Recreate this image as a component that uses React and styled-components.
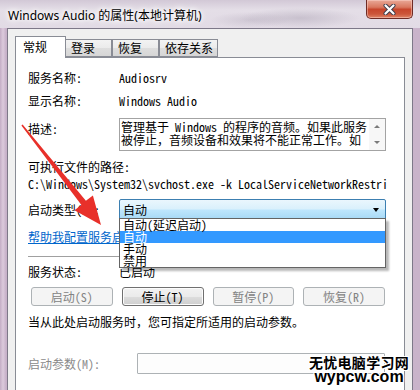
import React from "react";
import styled, { createGlobalStyle } from "styled-components";

const Global = createGlobalStyle`
  html, body { margin: 0; padding: 0; width: 420px; height: 390px; overflow: hidden; background: #fff; }
  #root { width: 420px; height: 390px; }
`;

const SIMSUN = `"Noto Sans Mono CJK SC", "Noto Sans CJK SC", monospace`;
const UI = `"Noto Sans", "Noto Sans CJK SC", sans-serif`;

const Window = styled.div`
  position: relative;
  width: 420px;
  height: 390px;
  overflow: hidden;
  display: flex;
  flex-direction: column;
  background: linear-gradient(90deg, #c3adc5 0px, #dccadc 3px, #c7b1c9 6px, #cdb9cf 50%, #c9b3ca 100%);
`;

const TitleBar = styled.div`
  height: 28px;
  flex: none;
  display: flex;
  justify-content: space-between;
  align-items: flex-start;
  background:
    radial-gradient(ellipse 60px 10px at 300px 18px, rgba(150,140,160,0.35), transparent),
    radial-gradient(ellipse 40px 8px at 250px 20px, rgba(150,140,160,0.25), transparent),
    linear-gradient(180deg, #d2c8d6 0%, #e4dee7 35%, #e2dbe5 100%);
`;

const Title = styled.div`
  font-family: ${UI};
  font-size: 12px;
  line-height: 16px;
  color: #000;
  padding: 8px 0 0 8px;
  text-shadow: 0 0 4px #fff, 0 0 6px #fff, 0 0 8px #fff;
`;

const CloseButton = styled.div`
  width: 47px;
  height: 19px;
  margin-right: 7px;
  box-sizing: border-box;
  border: 1px solid #6e2b25;
  border-top: none;
  border-radius: 0 0 5px 5px;
  background: linear-gradient(180deg, #e9a897 0%, #d9785f 40%, #c7462c 52%, #cc563a 78%, #de8568 100%);
  box-shadow: inset 0 0 0 1px rgba(255, 220, 210, 0.45);
  display: flex;
  align-items: center;
  justify-content: center;
`;

const Client = styled.div`
  flex: 1;
  margin: 0 7px;
  border: 1px solid #7d7888;
  border-bottom: none;
  background: #f0f0f0;
  padding: 7px 7px 0 7px;
  display: flex;
  flex-direction: column;
  min-height: 0;
`;

const TabStrip = styled.div`
  height: 21px;
  flex: none;
  display: flex;
  align-items: flex-end;
  position: relative;
  z-index: 2;
`;

const Tab = styled.div`
  box-sizing: border-box;
  min-width: ${(p) => (p.$active ? 51 : 47)}px;
  height: ${(p) => (p.$active ? 22 : 18)}px;
  margin-bottom: ${(p) => (p.$active ? -1 : 0)}px;
  margin-right: ${(p) => (p.$active ? -1 : 0)}px;
  padding: ${(p) => (p.$active ? "3px 4px 0 7px" : "1px 4px 0 5px")};
  border: 1px solid #898c95;
  border-bottom: ${(p) => (p.$active ? "none" : "1px solid #898c95")};
  background: ${(p) =>
    p.$active ? "#fff" : "linear-gradient(180deg, #f3f3f3 0%, #ebebeb 50%, #dedede 51%, #d6d6d6 100%)"};
  font-family: ${SIMSUN};
  font-size: 12px;
  line-height: 14px;
  color: #000;
  white-space: nowrap;
  position: relative;
  z-index: ${(p) => (p.$active ? 2 : 1)};
`;

const Panel = styled.div`
  flex: 1;
  border: 1px solid #898c95;
  border-bottom: none;
  background: #fff;
  padding: 14px 12px 0 12px;
  display: flex;
  flex-direction: column;
  position: relative;
  z-index: 1;
  font-family: ${SIMSUN};
  font-size: 12px;
  color: #000;
`;

const Row = styled.div`
  display: flex;
  align-items: ${(p) => (p.$top ? "flex-start" : "center")};
  height: ${(p) => p.$h || 12}px;
  margin-top: ${(p) => p.$mt || 0}px;
  flex: none;
  position: relative;
`;

const Label = styled.div`
  width: ${(p) => p.$w || 91}px;
  flex: none;
  line-height: 12px;
  white-space: nowrap;
  padding-top: ${(p) => p.$pt || 0}px;
  color: ${(p) => (p.$disabled ? "#8a8a8a" : "#000")};
`;

const Value = styled.div`
  line-height: 12px;
  white-space: pre;
`;

const DescBox = styled.div`
  box-sizing: border-box;
  width: 267px;
  height: 33px;
  border: 1px solid #a3a3a3;
  display: flex;
  background: #fff;
`;

const DescText = styled.div`
  flex: 1;
  padding: 1px 0 0 1px;
  line-height: 13px;
  white-space: pre;
  overflow: hidden;
`;

const ScrollBar = styled.div`
  width: 16px;
  flex: none;
  display: flex;
  flex-direction: column;
  background: #f7f7f7;
`;

const ScrollBtn = styled.div`
  flex: 1;
  display: flex;
  align-items: center;
  justify-content: center;
  &::after {
    content: "";
    width: 0;
    height: 0;
    border-left: 3px solid transparent;
    border-right: 3px solid transparent;
    ${(p) => (p.$down ? "border-top: 3px solid #7a7a7a;" : "border-bottom: 3px solid #7a7a7a;")}
  }
`;

const Combo = styled.div`
  box-sizing: border-box;
  width: 267px;
  height: 21px;
  border: 1px solid #3c7fb1;
  border-radius: 2px;
  background: linear-gradient(180deg, #eaf6fd 0%, #d9f0fc 48%, #bee6fd 52%, #a7d9f5 100%);
  display: flex;
  align-items: center;
  justify-content: space-between;
  padding: 0 6px 0 3px;
  line-height: 12px;
  position: relative;
  &::after {
    content: "";
    border-left: 3.5px solid transparent;
    border-right: 3.5px solid transparent;
    border-top: 4px solid #000;
  }
`;

const DropList = styled.div`
  position: absolute;
  top: calc(100% - 1px);
  left: -1px;
  width: 267px;
  box-sizing: border-box;
  border: 1px solid #646464;
  background: #fff;
  box-shadow: 3px 3px 2px rgba(0, 0, 0, 0.28);
  z-index: 5;
`;

const DropItem = styled.div`
  height: 12px;
  line-height: 12px;
  padding-left: 3px;
  white-space: nowrap;
  background: ${(p) => (p.$sel ? "#3399ff" : "transparent")};
  color: ${(p) => (p.$sel ? "#fff" : "#000")};
`;

const HelpLink = styled.a`
  display: block;
  margin-top: 11px;
  line-height: 12px;
  height: 12px;
  color: #0066cc;
  text-decoration: underline;
  flex: none;
  white-space: nowrap;
`;

const Separator = styled.div`
  margin-top: 13px;
  width: 357px;
  height: 1px;
  background: #a0a0a0;
  border-bottom: 1px solid #fff;
  flex: none;
`;

const ButtonRow = styled.div`
  display: flex;
  gap: 9px;
  padding-left: 3px;
  margin-top: 9px;
  height: 19px;
  width: 354px;
  flex: none;
`;

const Button = styled.div`
  flex: 1;
  box-sizing: border-box;
  height: 19px;
  border: 1px solid ${(p) => (p.$disabled ? "#adb2b5" : "#707070")};
  border-radius: 3px;
  background: ${(p) =>
    p.$disabled
      ? "#f4f4f4"
      : "linear-gradient(180deg, #f2f2f2 0%, #ebebeb 50%, #dddddd 51%, #cfcfcf 100%)"};
  box-shadow: ${(p) => (p.$disabled ? "none" : "inset 0 0 0 1px #fcfcfc")};
  color: ${(p) => (p.$disabled ? "#838383" : "#000")};
  display: flex;
  align-items: center;
  justify-content: center;
  line-height: 12px;
  white-space: nowrap;
`;

const Note = styled.div`
  margin-top: 10px;
  line-height: 12px;
  height: 12px;
  flex: none;
  white-space: nowrap;
`;

const ParamInput = styled.div`
  box-sizing: border-box;
  width: 248px;
  height: 21px;
  border: 1px solid #adb2b5;
  border-radius: 1px;
  background: #fdfdfd;
`;

const ArrowSvg = styled.svg`
  position: absolute;
  left: 0;
  top: 0;
  width: 420px;
  height: 390px;
  pointer-events: none;
  z-index: 10;
`;

const Watermark = styled.div`
  position: absolute;
  left: 306px;
  top: 354px;
  width: 106px;
  text-align: center;
  z-index: 11;
  color: #000;
  text-shadow: 1px 0 0 #fff, -1px 0 0 #fff, 0 1px 0 #fff, 0 -1px 0 #fff, 1px 1px 0 #fff,
    -1px -1px 0 #fff, 1px -1px 0 #fff, -1px 1px 0 #fff;
`;

const WmCn = styled.div`
  font-family: "Noto Sans CJK SC", sans-serif;
  font-weight: 700;
  font-size: 14px;
  line-height: 16px;
  letter-spacing: 0.3px;
`;

const WmEn = styled.div`
  font-family: "Liberation Sans", Arial, sans-serif;
  font-weight: 700;
  font-size: 16px;
  line-height: 14px;
`;

export default function App() {
  return (
    <>
      <Global />
      <Window>
        <TitleBar>
          <Title>Windows Audio 的属性(本地计算机)</Title>
          <CloseButton>
            <svg width="13" height="11" viewBox="0 0 13 11">
              <path d="M2.5 1.5 L10.5 9.5 M10.5 1.5 L2.5 9.5" stroke="#3b3b4a" strokeWidth="4" strokeLinecap="round" />
              <path d="M2.5 1.5 L10.5 9.5 M10.5 1.5 L2.5 9.5" stroke="#fff" strokeWidth="2.2" strokeLinecap="round" />
            </svg>
          </CloseButton>
        </TitleBar>
        <Client>
          <TabStrip>
            <Tab $active>常规</Tab>
            <Tab>登录</Tab>
            <Tab>恢复</Tab>
            <Tab>依存关系</Tab>
          </TabStrip>
          <Panel>
            <Row>
              <Label>服务名称:</Label>
              <Value>Audiosrv</Value>
            </Row>
            <Row $mt={11}>
              <Label>显示名称:</Label>
              <Value>Windows Audio</Value>
            </Row>
            <Row $mt={11} $h={33} $top>
              <Label $pt={5}>描述:</Label>
              <DescBox>
                <DescText>
                  {"管理基于 Windows 的程序的音频。如果此服务\n被停止，音频设备和效果将不能正常工作。如"}
                </DescText>
                <ScrollBar>
                  <ScrollBtn />
                  <ScrollBtn $down />
                </ScrollBar>
              </DescBox>
            </Row>
            <Row $mt={10}>
              <Label $w={200}>可执行文件的路径:</Label>
            </Row>
            <Row $mt={5}>
              <Value>C:\Windows\System32\svchost.exe -k LocalServiceNetworkRestri</Value>
            </Row>
            <Row $mt={9} $h={21}>
              <Label>启动类型(E):</Label>
              <Combo>
                <span>自动</span>
                <DropList>
                  <DropItem>自动(延迟启动)</DropItem>
                  <DropItem $sel>自动</DropItem>
                  <DropItem>手动</DropItem>
                  <DropItem>禁用</DropItem>
                </DropList>
              </Combo>
            </Row>
            <HelpLink>帮助我配置服务启动选项。</HelpLink>
            <Separator />
            <Row $mt={8}>
              <Label>服务状态:</Label>
              <Value>已启动</Value>
            </Row>
            <ButtonRow>
              <Button $disabled>启动(S)</Button>
              <Button>停止(T)</Button>
              <Button $disabled>暂停(P)</Button>
              <Button $disabled>恢复(R)</Button>
            </ButtonRow>
            <Note>当从此处启动服务时，您可指定所适用的启动参数。</Note>
            <Row $mt={25} $h={21}>
              <Label $w={109} $disabled>启动参数(M):</Label>
              <ParamInput />
            </Row>
          </Panel>
        </Client>
        <ArrowSvg viewBox="0 0 420 390">
          <polygon
            points="22.6,124.4 85.9,200.8 92.9,195.6 101,225 74.4,210.3 81.4,205.1 21.4,125.6"
            fill="#e8302a"
          />
        </ArrowSvg>
        <Watermark>
          <WmCn>无忧电脑学习网</WmCn>
          <WmEn>wypcw.com</WmEn>
        </Watermark>
      </Window>
    </>
  );
}
